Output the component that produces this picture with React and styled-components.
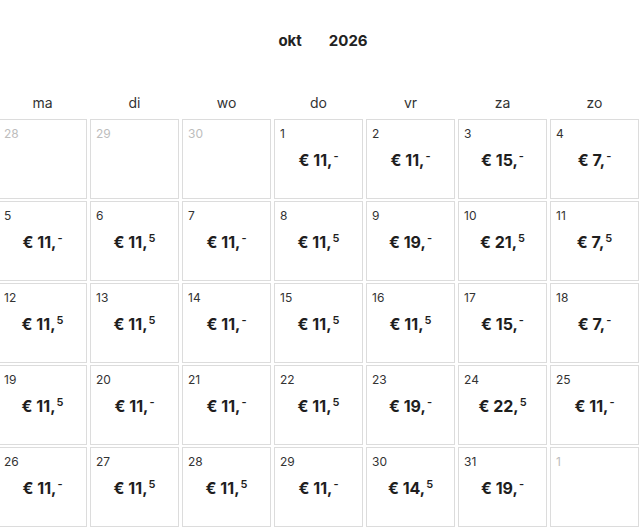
import React from "react";
import styled, { createGlobalStyle } from "styled-components";

const Global = createGlobalStyle`
  html, body { margin: 0; padding: 0; background: #fff; }
  body { font-family: Inter, "Open Sans", "Liberation Sans", sans-serif; color: #222; overflow: hidden; }
`;

const Page = styled.div`
  width: 640px;
  height: 527px;
  overflow: hidden;
`;

const Header = styled.div`
  display: flex;
  justify-content: center;
  gap: 27px;
  padding-top: 31px;
  padding-left: 6px;
  height: 20px;
  font-size: 15px;
  font-weight: 700;
  color: #222;
  line-height: 20px;
`;

const Grid = styled.div`
  display: grid;
  grid-template-columns: repeat(7, 89px);
  column-gap: 3px;
  row-gap: 2px;
  margin-left: -2px;
  width: 644px;
`;

const DayName = styled.div`
  text-align: center;
  font-size: 14px;
  color: #333;
  padding-top: 42px;
  height: 24px;
  line-height: 20px;
`;

const Cell = styled.div`
  height: 78px;
  border: 1px solid #dcdcdc;
  position: relative;
  background: #fff;
`;

const DayNum = styled.div`
  position: absolute;
  left: 5px;
  top: 6px;
  font-size: 12px;
  color: ${(p) => (p.$muted ? "#bdbdbd" : "#333")};
`;

const Price = styled.div`
  position: absolute;
  left: 0;
  right: 0;
  top: 30px;
  text-align: center;
  font-size: 16px;
  font-weight: 700;
  color: #1e1e1e;
  white-space: nowrap;
`;

const Sup = styled.sup`
  font-size: 11px;
  font-weight: 600;
  vertical-align: 0;
  position: relative;
  top: -6px;
  margin-left: 1px;
`;

const days = ["ma", "di", "wo", "do", "vr", "za", "zo"];

const cells = [
  ["28", null, true], ["29", null, true], ["30", null, true],
  ["1", "11,-"], ["2", "11,-"], ["3", "15,-"], ["4", "7,-"],
  ["5", "11,-"], ["6", "11,5"], ["7", "11,-"], ["8", "11,5"], ["9", "19,-"], ["10", "21,5"], ["11", "7,5"],
  ["12", "11,5"], ["13", "11,5"], ["14", "11,-"], ["15", "11,5"], ["16", "11,5"], ["17", "15,-"], ["18", "7,-"],
  ["19", "11,5"], ["20", "11,-"], ["21", "11,-"], ["22", "11,5"], ["23", "19,-"], ["24", "22,5"], ["25", "11,-"],
  ["26", "11,-"], ["27", "11,5"], ["28", "11,5"], ["29", "11,-"], ["30", "14,5"], ["31", "19,-"], ["1", null, true],
];

function PriceText({ v }) {
  const [whole, frac] = v.split(",");
  return (
    <Price>
      € {whole},<Sup>{frac}</Sup>
    </Price>
  );
}

export default function App() {
  return (
    <Page>
      <Global />
      <Header>
        <span>okt</span>
        <span>2026</span>
      </Header>
      <Grid>
        {days.map((d) => (
          <DayName key={d}>{d}</DayName>
        ))}
        {cells.map(([n, p, muted], i) => (
          <Cell key={i}>
            <DayNum $muted={muted}>{n}</DayNum>
            {p && <PriceText v={p} />}
          </Cell>
        ))}
      </Grid>
    </Page>
  );
}
